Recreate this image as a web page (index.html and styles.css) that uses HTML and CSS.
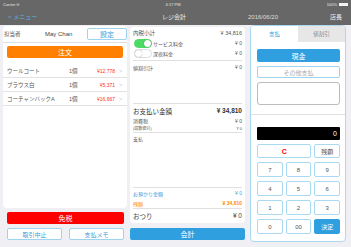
FILE: index.html
```html
<!DOCTYPE html>
<html lang="ja">
<head>
    <meta charset="UTF-8">
    <meta name="viewport" content="width=device-width, initial-scale=1.0">
    <title>レジ会計</title>
    <link rel="stylesheet" href="styles.css">
</head>
<body>
    <div class="status">
        <span class="carrier">Carrier ≋</span>
        <span class="clock">4:17 PM</span>
        <span class="battery">100% <i class="batt"></i></span>
    </div>
    <div class="navbar">
        <span class="back">&lt; メニュー</span>
        <span class="title">レジ会計</span>
        <span class="date">2016/06/20</span>
        <span class="user">店長</span>
    </div>

    <div class="main">
        <!-- 左: 注文リスト -->
        <div class="col-left">
            <div class="panel order">
                <div class="staff">
                    <span class="staff-label">担当者</span>
                    <span class="staff-name">May Chan</span>
                    <button class="btn-outline settei">設定</button>
                </div>
                <button class="btn-orange">注文</button>
                <div class="items">
                    <div class="item">
                        <span class="name">ウールコート</span>
                        <span class="qty">1個</span>
                        <span class="price">¥12,778</span>
                        <span class="chev">&gt;</span>
                    </div>
                    <div class="item">
                        <span class="name">ブラウス白</span>
                        <span class="qty">1個</span>
                        <span class="price">¥5,371</span>
                        <span class="chev">&gt;</span>
                    </div>
                    <div class="item">
                        <span class="name">コーチャンバックA</span>
                        <span class="qty">1個</span>
                        <span class="price">¥16,667</span>
                        <span class="chev">&gt;</span>
                    </div>
                </div>
            </div>
            <button class="btn-red">免税</button>
            <div class="pair">
                <button class="btn-outline">取引中止</button>
                <button class="btn-outline">支払メモ</button>
            </div>
        </div>

        <!-- 中央: 金額 -->
        <div class="col-mid">
            <div class="panel sums">
                <div class="row r-top"><span>内税小計</span><span>¥ 34,816</span></div>
                <div class="row r-sw">
                    <span class="sw-label"><i class="switch on"></i>サービス料金</span><span>¥ 0</span>
                </div>
                <div class="row r-sw">
                    <span class="sw-label"><i class="switch"></i>深夜料金</span><span>¥ 0</span>
                </div>
                <div class="line l-1"></div>
                <div class="row r-12"><span>値割引計</span><span>¥ 0</span></div>
                <div class="line l-2"></div>
                <div class="row r-total"><span>お支払い金額</span><b>¥ 34,810</b></div>
                <div class="row r-tax"><span>消費税</span><span>¥ 0</span></div>
                <div class="row r-frac"><span>(端数値引)</span><span>¥ 0</span></div>
                <div class="line"></div>
                <div class="row r-pay"><span>支払</span></div>
                <div class="line l-3"></div>
                <div class="row r-10 blue"><span>お預かり金額</span><span>¥ 0</span></div>
                <div class="row r-10 orange"><span>残額</span><b>¥ 34,810</b></div>
                <div class="line"></div>
                <div class="row r-change"><span>おつり</span><span>¥ 0</span></div>
            </div>
            <button class="btn-blue kaikei">会計</button>
        </div>

        <!-- 右: 支払 -->
        <div class="panel col-right">
            <div class="tabs">
                <span class="tab active">支払</span>
                <span class="tab">値割引</span>
            </div>
            <div class="pay-body">
                <button class="btn-blue cash">現金</button>
                <button class="btn-outline other">その他支払</button>
                <div class="memo"></div>
            </div>
            <div class="line full"></div>
            <div class="pay-body">
                <div class="display">0</div>
                <div class="keypad">
                    <button class="key clear">C</button>
                    <button class="key">残額</button>
                    <button class="key">7</button>
                    <button class="key">8</button>
                    <button class="key">9</button>
                    <button class="key">4</button>
                    <button class="key">5</button>
                    <button class="key">6</button>
                    <button class="key">1</button>
                    <button class="key">2</button>
                    <button class="key">3</button>
                    <button class="key">0</button>
                    <button class="key">00</button>
                    <button class="key ok">決定</button>
                </div>
            </div>
        </div>
    </div>
</body>
</html>
```

FILE: styles.css
```css
* {
    box-sizing: border-box;
}
body {
    margin: 0;
    width: 351px;
    height: 247px;
    overflow: hidden;
    background: #efeff4;
    font-family: "Liberation Sans", "Noto Sans CJK JP", sans-serif;
    font-size: 5.5px;
    color: #555;
    white-space: nowrap;
}
button {
    font-family: inherit;
    margin: 0;
    padding: 0;
    cursor: pointer;
}
.status {
    height: 8px;
    background: #676767;
    color: #e8e8e8;
    font-size: 4px;
    display: flex;
    align-items: center;
    justify-content: space-between;
    padding: 0 3px;
}
.battery {
    display: flex;
    align-items: center;
    gap: 2px;
}
.batt {
    display: inline-block;
    width: 9px;
    height: 3px;
    background: #f4f4f4;
}
.navbar {
    height: 17px;
    background: #676767;
    color: #f0f0f0;
    display: flex;
    align-items: center;
    font-size: 6px;
    padding: 0 8px;
}
.back {
    color: #5ab3ee;
    width: 154px;
}
.title {
    width: 86px;
}
.date {
    width: 82px;
    color: #ddd;
}
.panel {
    background: #fff;
    border-radius: 4px;
}
.main {
    display: flex;
    align-items: flex-start;
}

/* left */
.col-left {
    width: 124px;
    margin-left: 3px;
}
.order {
    margin-top: 1px;
    height: 182px;
}
.staff {
    height: 17px;
    display: flex;
    align-items: center;
    border-bottom: 1px solid #dedede;
    padding-left: 1px;
}
.staff-label {
    width: 41px;
}
.staff-name {
    width: 42px;
    color: #444;
    font-size: 6px;
}
.btn-outline {
    background: #fff;
    border: 1px solid #9fd3f0;
    border-radius: 2px;
    color: #3b9bd8;
    font-size: 6px;
}
.settei {
    width: 40px;
    height: 12px;
    font-size: 7px;
    margin-left: auto;
}
.btn-orange {
    display: block;
    width: 116px;
    height: 12px;
    margin: 3px 0 0 4px;
    background: #ff8000;
    border: none;
    border-radius: 2px;
    color: #fff;
    font-size: 7px;
}
.items {
    margin-top: 6px;
}
.item {
    height: 14px;
    display: flex;
    align-items: center;
    border-bottom: 1px solid #e2e2e2;
    padding-left: 4px;
    font-size: 5.5px;
}
.item .name {
    width: 62px;
}
.item .qty {
    width: 13px;
}
.item .price {
    width: 33px;
    text-align: right;
    color: #ff2d2d;
    font-size: 5px;
}
.item .chev {
    margin-left: 4px;
    color: #c2c2c6;
}
.btn-red {
    display: block;
    width: 117px;
    height: 12px;
    margin: 4px 0 0 4px;
    background: #ff0000;
    border: none;
    border-radius: 2px;
    color: #fff;
    font-size: 7px;
}
.pair {
    display: flex;
    gap: 7px;
    margin: 4px 0 0 4px;
}
.pair .btn-outline {
    width: 55px;
    height: 12px;
}

/* middle */
.col-mid {
    width: 115px;
    margin-left: 3px;
}
.sums {
    margin-top: 2px;
    height: 196px;
    padding: 0 3px;
}
.row {
    display: flex;
    justify-content: space-between;
    align-items: center;
    font-size: 5px;
}
.r-top {
    height: 11px;
    font-size: 5.5px;
}
.r-sw {
    height: 10px;
}
.sw-label {
    display: flex;
    align-items: center;
    gap: 1px;
    color: #555;
    font-size: 5px;
}
.switch {
    display: inline-block;
    position: relative;
    width: 18px;
    height: 9px;
    border-radius: 5px;
    border: 1px solid #ddd;
    background: #fff;
    margin-left: 1px;
}
.switch::after {
    content: "";
    position: absolute;
    top: 0;
    left: 0;
    width: 7px;
    height: 7px;
    border-radius: 50%;
    background: #fff;
    box-shadow: 0 0 1px rgba(0, 0, 0, 0.5);
}
.switch.on {
    background: #4cd964;
    border-color: #4cd964;
}
.switch.on::after {
    left: 9px;
}
.line {
    height: 1px;
    background: #e0e0e0;
}
.l-1 {
    margin-top: 2px;
}
.r-12 {
    height: 12px;
}
.l-2 {
    margin-top: 30px;
}
.r-total {
    height: 13px;
    font-size: 6.5px;
    color: #333;
}
.r-tax {
    height: 7px;
}
.r-frac {
    height: 8px;
    font-size: 4px;
}
.r-pay {
    height: 10px;
}
.l-3 {
    margin-top: 44px;
}
.r-10 {
    height: 10px;
}
.blue {
    color: #3aa0e0;
}
.orange {
    color: #ff8c00;
}
.r-change {
    height: 13px;
    font-size: 6.5px;
    color: #444;
}
.btn-blue {
    background: #2f9fe0;
    border: none;
    border-radius: 2px;
    color: #fff;
    font-size: 7px;
}
.kaikei {
    display: block;
    width: 100%;
    height: 12px;
    margin-top: 5px;
}

/* right */
.col-right {
    width: 96px;
    height: 217px;
    margin-left: 5px;
    border: 1px solid #a9daf2;
    overflow: hidden;
}
.tabs {
    display: flex;
    height: 16px;
}
.tab {
    flex: 1;
    display: flex;
    align-items: center;
    justify-content: center;
    background: #e7e7e7;
    color: #888;
}
.tab.active {
    background: #fff;
    color: #3b9bd8;
}
.pay-body {
    padding: 0 5px 0 6px;
}
.cash {
    display: block;
    width: 100%;
    height: 13px;
    margin-top: 7px;
}
.other {
    display: block;
    width: 100%;
    height: 12px;
    margin-top: 4px;
    color: #aaa;
}
.memo {
    height: 23px;
    margin-top: 4px;
    border: 1px solid #bcbcbc;
    border-radius: 3px;
}
.full {
    margin-top: 9px;
}
.display {
    margin-top: 12px;
    height: 13px;
    background: #000;
    color: #fff;
    border-radius: 1px;
    text-align: right;
    padding-right: 3px;
    line-height: 13px;
    font-size: 7px;
}
.keypad {
    display: grid;
    grid-template-columns: repeat(3, 1fr);
    grid-template-rows: 14px repeat(4, 15px);
    gap: 4px 3px;
    margin-top: 4px;
}
.key {
    background: #fff;
    border: 1px solid #a9daf2;
    border-radius: 2px;
    color: #555;
    font-size: 6px;
}
.key.clear {
    grid-column: span 2;
    color: #f00;
    font-weight: bold;
    font-size: 7px;
}
.key.ok {
    background: #2f9fe0;
    border-color: #2f9fe0;
    color: #fff;
}
```
